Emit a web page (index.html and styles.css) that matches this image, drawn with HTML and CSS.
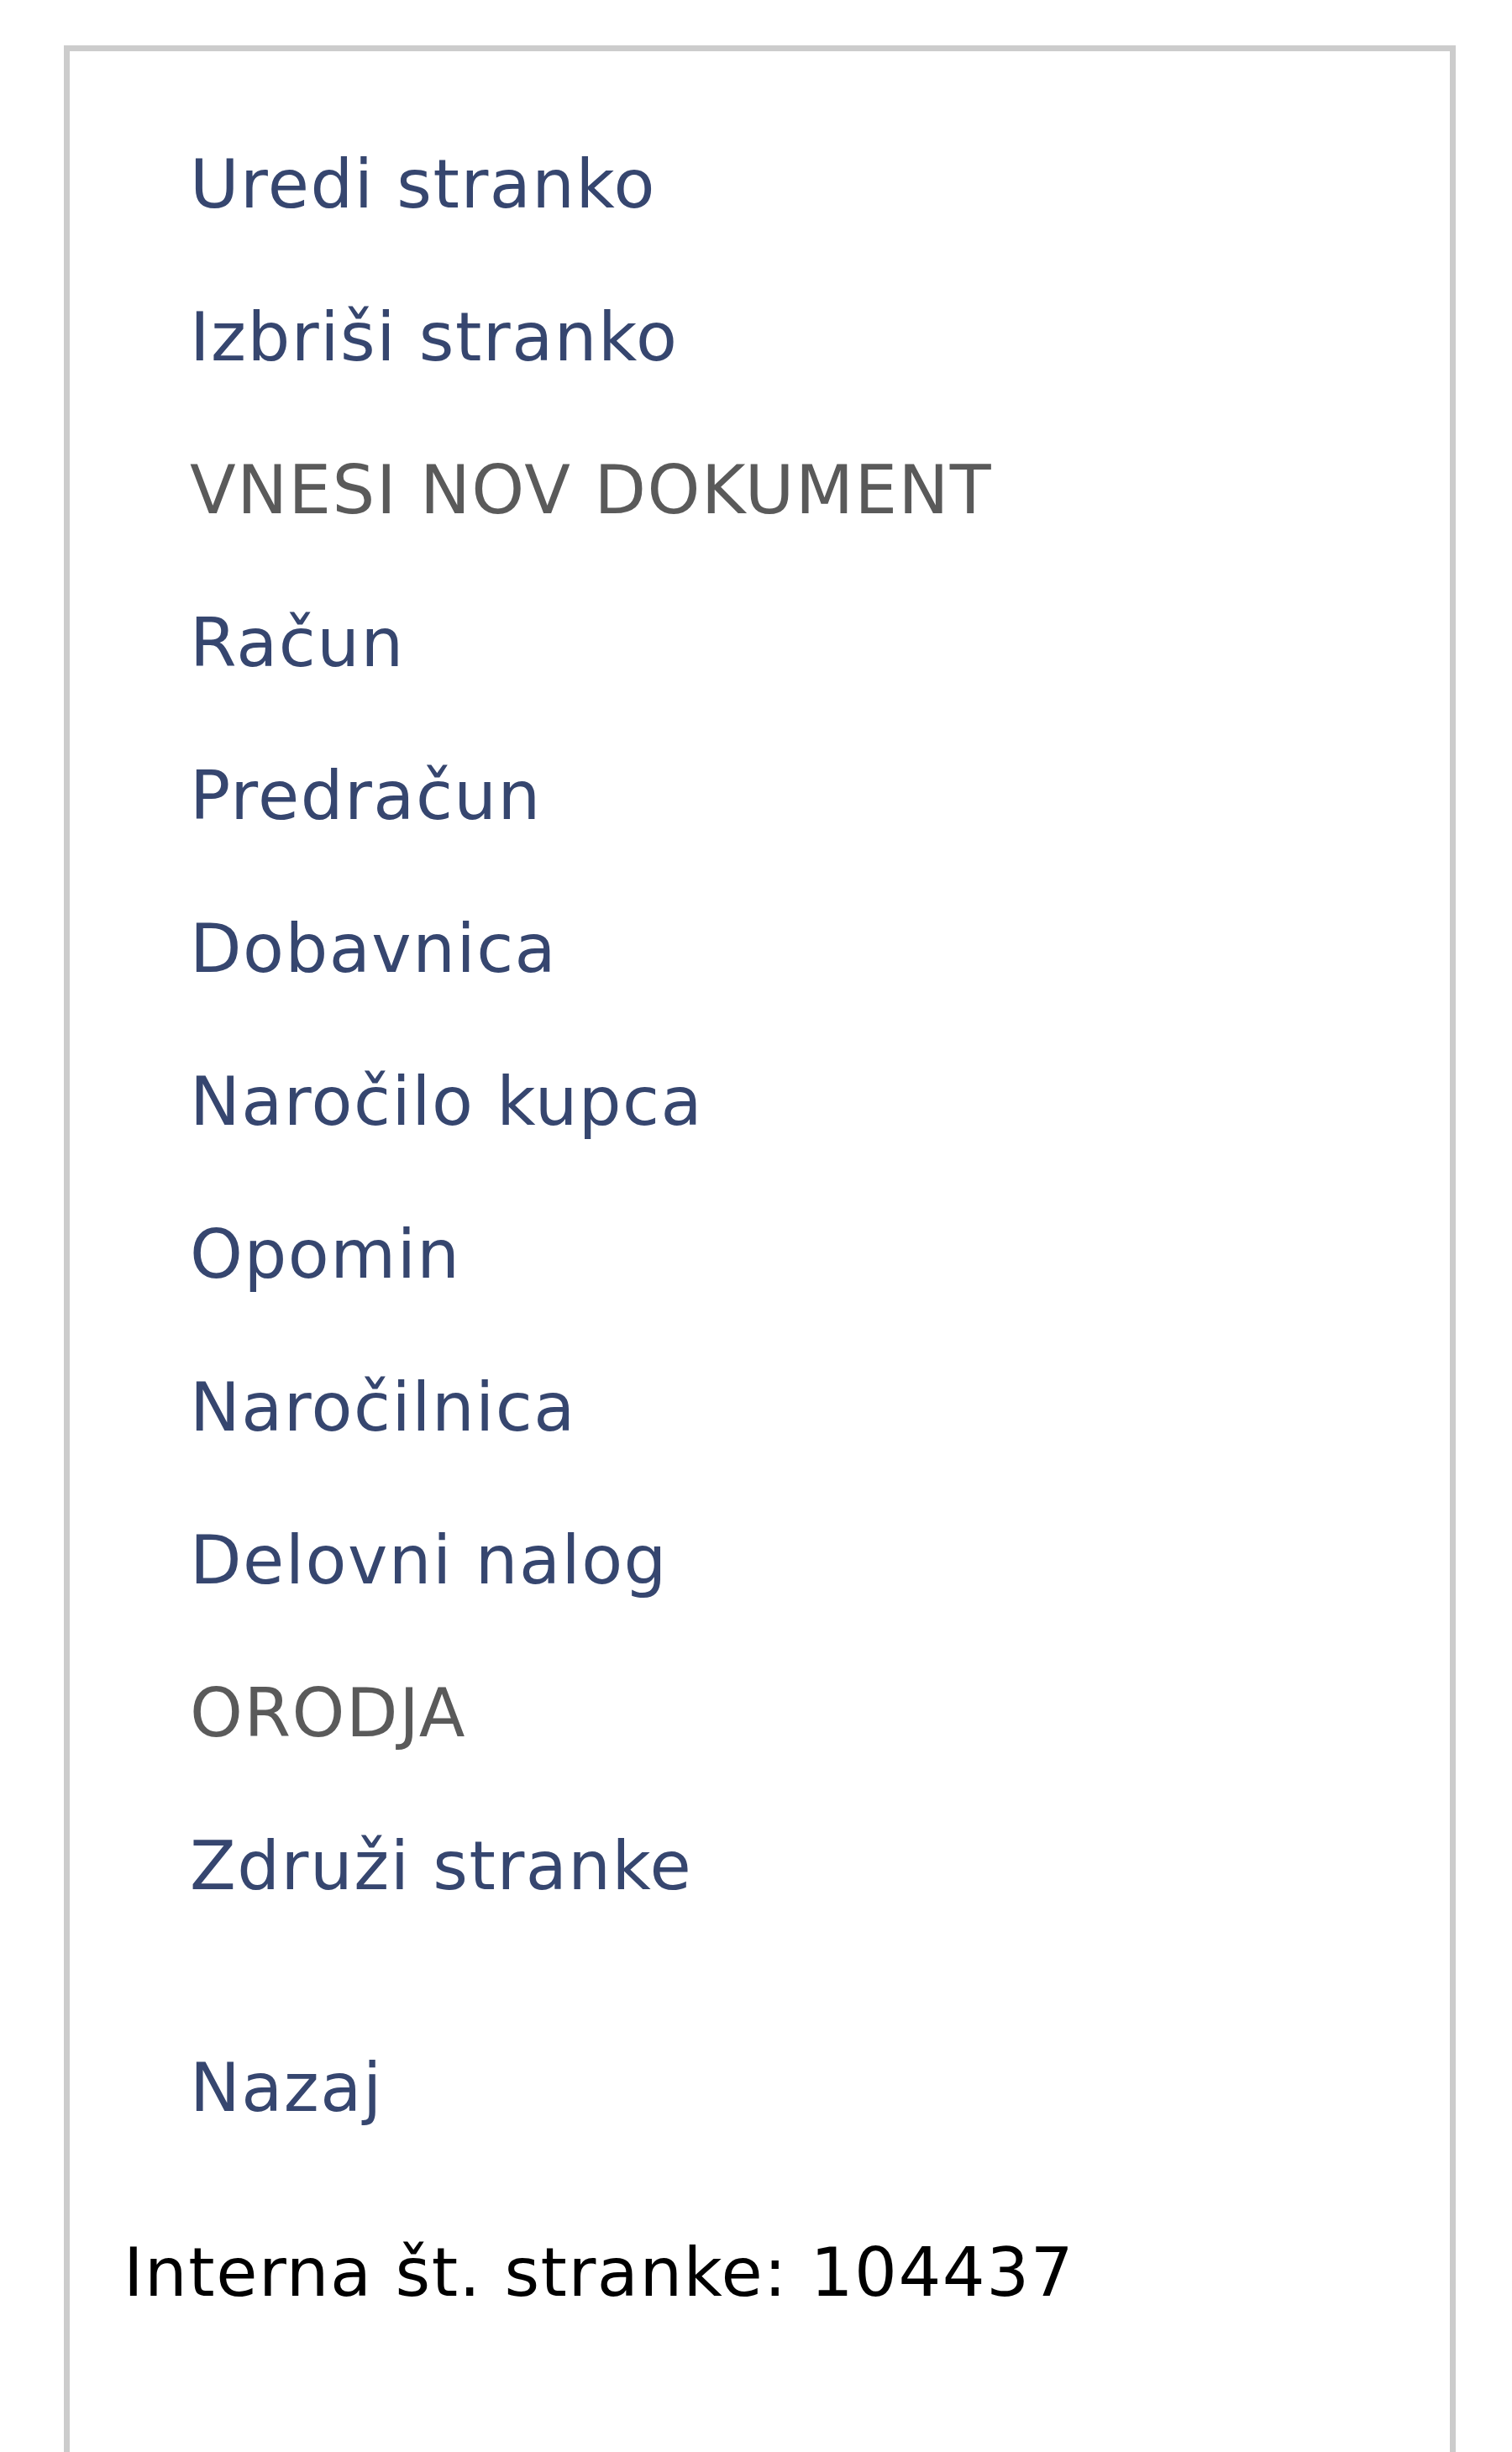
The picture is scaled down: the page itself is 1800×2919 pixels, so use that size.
FILE: index.html
```html
<!DOCTYPE html>
<html lang="sl">
<head>
<meta charset="utf-8">
<title>Stranka</title>
<link rel="stylesheet" href="styles.css">
</head>
<body>
<div class="panel">
  <ul class="menu">
    <li><a class="link" href="#">Uredi stranko</a></li>
    <li><a class="link" href="#">Izbriši stranko</a></li>
    <li class="heading">VNESI NOV DOKUMENT</li>
    <li><a class="link" href="#">Račun</a></li>
    <li><a class="link" href="#">Predračun</a></li>
    <li><a class="link" href="#">Dobavnica</a></li>
    <li><a class="link" href="#">Naročilo kupca</a></li>
    <li><a class="link" href="#">Opomin</a></li>
    <li><a class="link" href="#">Naročilnica</a></li>
    <li><a class="link" href="#">Delovni nalog</a></li>
    <li class="heading">ORODJA</li>
    <li><a class="link" href="#">Združi stranke</a></li>
    <li class="back"><a class="link" href="#">Nazaj</a></li>
  </ul>
  <p class="info">Interna št. stranke: 104437</p>
</div>
</body>
</html>
```

FILE: styles.css
```css
html, body {
  margin: 0;
  padding: 0;
  background: #ffffff;
}

body {
  font-family: "DejaVu Sans", Verdana, sans-serif;
  font-size: 80px;
  letter-spacing: 1.5px;
  padding: 54px 0 0 76px;
  width: 1657px;
  box-sizing: content-box;
}

.panel {
  border: 7px solid #cccccc;
  border-bottom: none;
  min-height: 2900px;
  padding-top: 68px;
  box-sizing: border-box;
}

.menu {
  list-style: none;
  margin: 0;
  padding: 0 0 0 143px;
}

.menu li {
  line-height: 182px;
  height: 182px;
  white-space: nowrap;
}

.link {
  color: #36466f;
  text-decoration: none;
}

.heading {
  color: #5a5a5a;
}

.menu .back {
  margin-top: 82px;
}

.info {
  margin: 38px 0 0 0;
  padding-left: 64px;
  line-height: 182px;
  color: #000000;
}
```
